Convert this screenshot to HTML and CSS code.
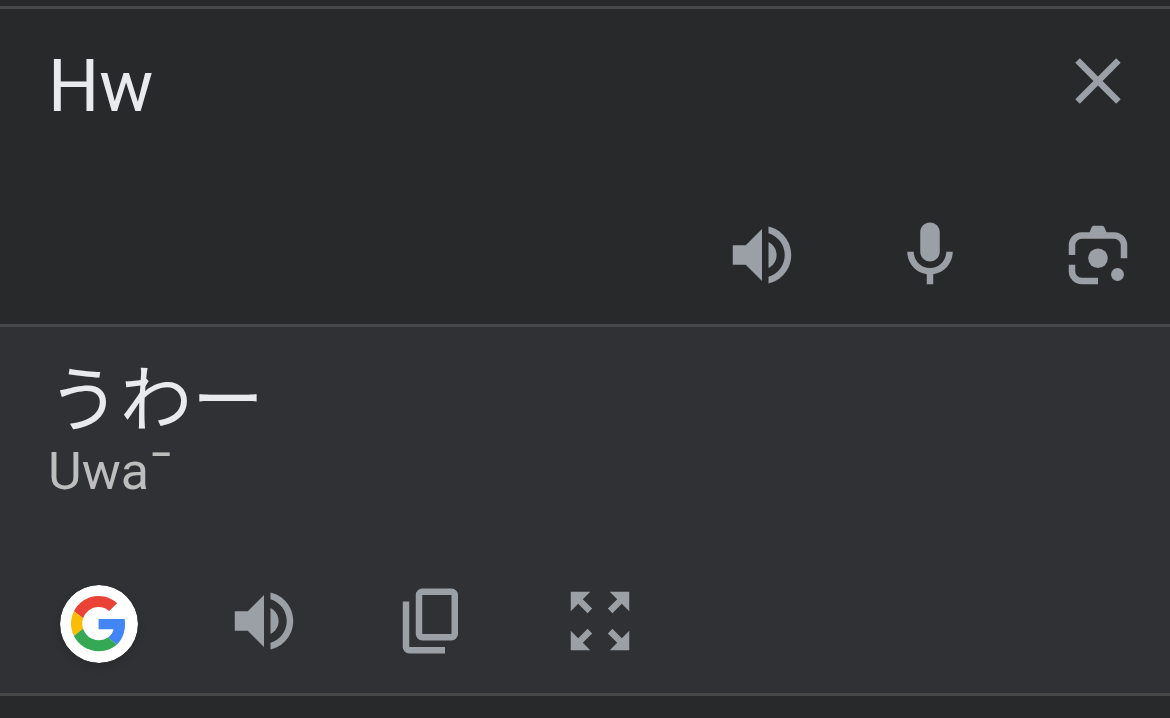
FILE: index.html
```html
<!DOCTYPE html>
<html lang="en">
<head>
    <meta charset="UTF-8">
    <meta name="viewport" content="width=device-width, initial-scale=1.0">
    <title>Translate</title>
    <link rel="stylesheet" href="styles.css">
</head>
<body>
    <main class="translator">
        <section class="panel source">
            <div class="source-top">
                <textarea class="source-text" rows="2" aria-label="Source text" spellcheck="false">Hw</textarea>
                <button type="button" class="icon-btn" aria-label="Clear text">
                    <svg viewBox="0 0 24 24"><path d="M19 6.41L17.59 5 12 10.59 6.41 5 5 6.41 10.59 12 5 17.59 6.41 19 12 13.41 17.59 19 19 17.59 13.41 12z"/></svg>
                </button>
            </div>
            <div class="actions source-actions">
                <button type="button" class="icon-btn" aria-label="Listen to source">
                    <svg viewBox="0 0 24 24"><path d="M3 9v6h4l5 5V4L7 9H3zM16.5 12c0-1.77-1.02-3.29-2.5-4.03v8.05c1.48-.73 2.5-2.25 2.5-4.02zM14 3.23v2.06c2.89.86 5 3.54 5 6.71s-2.11 5.85-5 6.71v2.06c4.01-.91 7-4.49 7-8.77s-2.99-7.86-7-8.77z"/></svg>
                </button>
                <button type="button" class="icon-btn" aria-label="Speak">
                    <svg viewBox="0 0 24 24"><path d="M12 14c1.66 0 3-1.34 3-3V5c0-1.66-1.34-3-3-3S9 3.34 9 5v6c0 1.66 1.34 3 3 3zM17 11c0 2.76-2.24 5-5 5s-5-2.24-5-5H5c0 3.53 2.61 6.43 6 6.92V21h2v-3.08c3.39-.49 6-3.39 6-6.92h-2z"/></svg>
                </button>
                <button type="button" class="icon-btn" aria-label="Search with camera">
                    <svg viewBox="0 0 24 24">
                        <path class="line" d="M4 12V9a3 3 0 0 1 3-3h10a3 3 0 0 1 3 3v4M4 15v2a3 3 0 0 0 3 3h5"/>
                        <path d="M10.7 3h2.600q.5 0 .7.500L15 6H9l1-2.500q.2-.5.7-.5z"/>
                        <circle cx="12" cy="13" r="3"/>
                        <circle cx="18" cy="18" r="2"/>
                    </svg>
                </button>
            </div>
        </section>

        <section class="panel result">
            <p class="result-text" lang="ja">うわー</p>
            <p class="romaji">Uwaˉ</p>
            <div class="result-actions">
                <a href="#" class="google-link" aria-label="Search on Google">
                    <svg viewBox="0 0 78 78">
                        <circle cx="39" cy="39" r="39" fill="#fff"/>
                        <g transform="translate(11 11) scale(1.15)">
                            <path fill="#ea4335" d="M24 9.5c3.54 0 6.71 1.22 9.21 3.6l6.85-6.85C35.9 2.38 30.47 0 24 0 14.62 0 6.51 5.38 2.56 13.22l7.98 6.19C12.43 13.72 17.74 9.5 24 9.5z"/>
                            <path fill="#4285f4" d="M46.98 24.55c0-1.57-.15-3.09-.38-4.55H24v9.02h12.94c-.58 2.96-2.26 5.48-4.78 7.18l7.73 6c4.51-4.18 7.09-10.36 7.09-17.65z"/>
                            <path fill="#fbbc05" d="M10.53 28.59c-.48-1.45-.76-2.99-.76-4.59s.27-3.14.76-4.59l-7.98-6.19C.92 16.46 0 20.12 0 24c0 3.88.92 7.54 2.56 10.78l7.97-6.19z"/>
                            <path fill="#34a853" d="M24 48c6.48 0 11.93-2.13 15.89-5.81l-7.73-6c-2.15 1.45-4.92 2.3-8.16 2.3-6.26 0-11.57-4.22-13.47-9.91l-7.98 6.19C6.51 42.62 14.62 48 24 48z"/>
                        </g>
                    </svg>
                </a>
                <div class="actions">
                    <button type="button" class="icon-btn" aria-label="Listen to translation">
                        <svg viewBox="0 0 24 24"><path d="M3 9v6h4l5 5V4L7 9H3zM16.5 12c0-1.77-1.02-3.29-2.5-4.03v8.05c1.48-.73 2.5-2.25 2.5-4.02zM14 3.23v2.06c2.89.86 5 3.54 5 6.71s-2.11 5.85-5 6.71v2.06c4.01-.91 7-4.49 7-8.77s-2.99-7.86-7-8.77z"/></svg>
                    </button>
                    <button type="button" class="icon-btn" aria-label="Copy translation">
                        <svg viewBox="0 0 24 24">
                            <rect class="line" x="8" y="3" width="11" height="14" rx="1"/>
                            <path d="M3 6h2v14h11v2H5a2 2 0 0 1-2-2z"/>
                        </svg>
                    </button>
                    <button type="button" class="icon-btn" aria-label="Full screen">
                        <svg viewBox="0 0 24 24"><path d="M15 3l2.3 2.3-2.89 2.87 1.42 1.42L18.7 6.7 21 9V3zM3 9l2.3-2.3 2.87 2.89 1.42-1.42L6.7 5.3 9 3H3zM9 21l-2.3-2.3 2.89-2.87-1.42-1.42L5.3 17.3 3 15v6zM21 15l-2.3 2.3-2.87-2.89-1.42 1.42 2.89 2.87L15 21h6z"/></svg>
                    </button>
                </div>
            </div>
        </section>
    </main>
</body>
</html>
```
FILE: styles.css
```css
* {
    box-sizing: border-box;
}

body {
    margin: 0;
    background-color: #28292b;
    color: #e8eaed;
    font-family: Roboto, "Noto Sans CJK JP", sans-serif;
}

.translator {
    padding-top: 6px;
}

.panel {
    border-top: 3px solid #47484a;
}

/* Source text */
.source {
    padding: 33px 33px 30px 48px;
}

.source-top {
    display: flex;
    align-items: flex-start;
}

.source-text {
    flex: 1;
    min-width: 0;
    display: block;
    padding: 2px 0 0;
    border: none;
    outline: none;
    resize: none;
    overflow: hidden;
    background: none;
    color: inherit;
    font-family: inherit;
    font-size: 72px;
    line-height: 86px;
}

/* Icon buttons */
.actions {
    display: flex;
    gap: 90px;
}

.source-actions {
    justify-content: flex-end;
}

.icon-btn {
    width: 78px;
    height: 78px;
    flex: none;
    padding: 0;
    border: none;
    background: none;
    cursor: pointer;
}

.icon-btn svg {
    display: block;
    width: 100%;
    height: 100%;
    fill: #9aa0a6;
}

.icon-btn .line {
    fill: none;
    stroke: #9aa0a6;
    stroke-width: 2;
}

/* Translation */
.result {
    padding: 25px 33px 30px 48px;
    background-color: #303134;
    border-bottom: 3px solid #47484a;
}

.result-text {
    margin: 0;
    font-family: "Noto Sans CJK JP", sans-serif;
    font-size: 72px;
    line-height: 84px;
}

.romaji {
    margin: 4px 0 0;
    color: #bdbdbd;
    font-size: 52px;
    line-height: 64px;
}

.result-actions {
    display: flex;
    align-items: flex-start;
    gap: 87px;
    padding: 78px 0 0 12px;
}

.google-link {
    width: 78px;
    padding-top: 3px;
}

.google-link svg {
    display: block;
    width: 100%;
    border-radius: 50%;
    box-shadow: 0 3px 9px rgba(0, 0, 0, 0.15);
}
```
